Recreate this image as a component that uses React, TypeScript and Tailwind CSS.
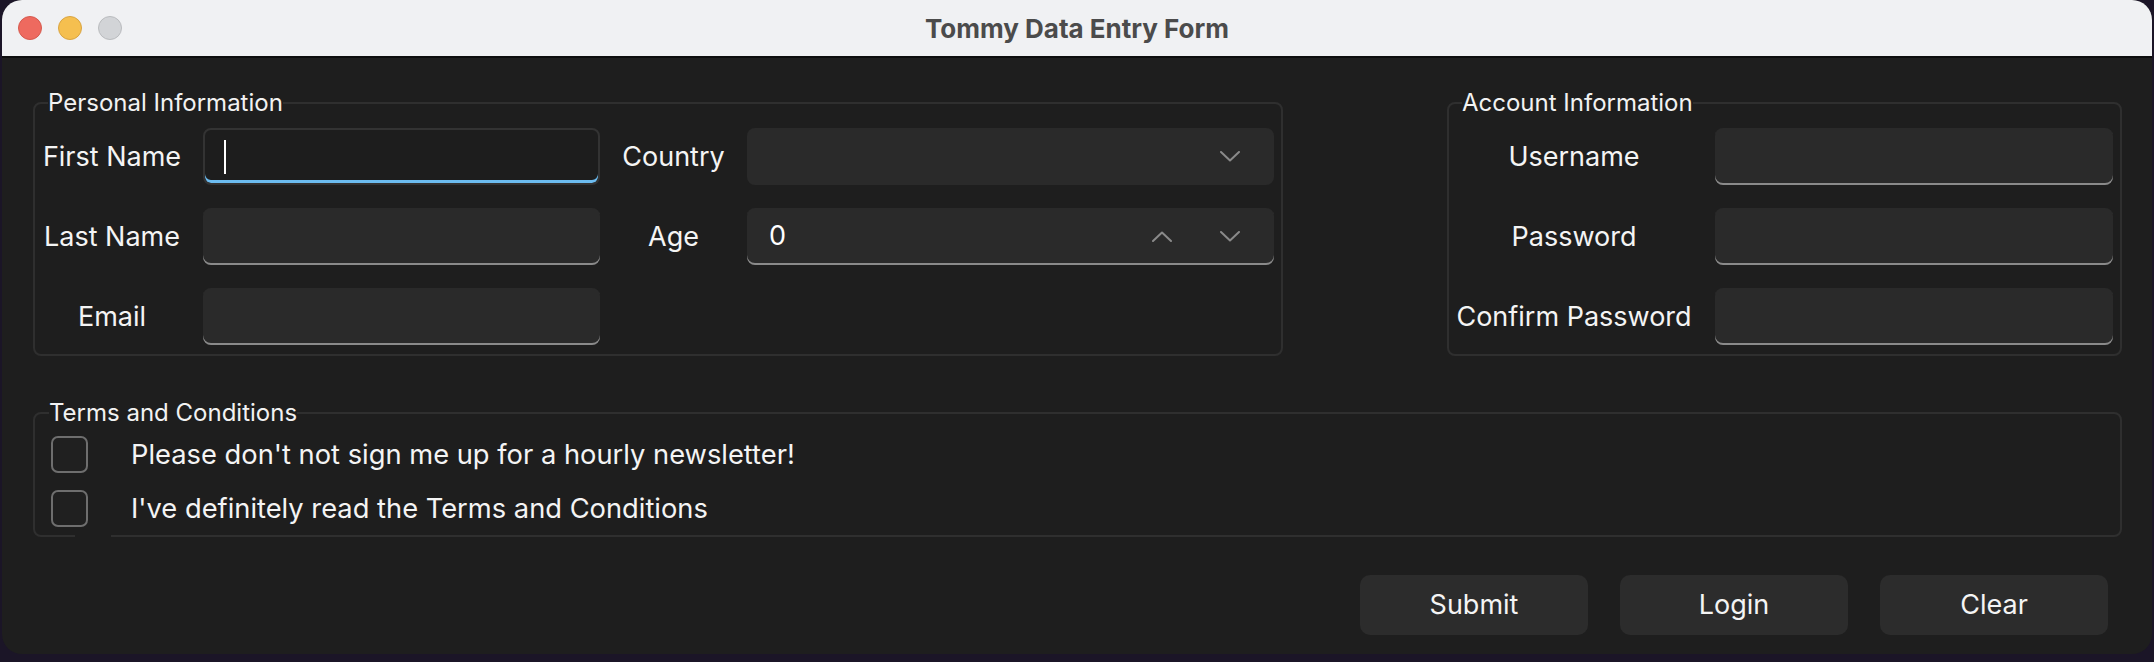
import React from "react";

const font = { fontFamily: "Inter, 'Noto Sans', sans-serif" };

function Chevron({ up = false }: { up?: boolean }) {
  return (
    <svg width="20" height="11" viewBox="0 0 20 11" fill="none">
      <path
        d={up ? "M1 10 L10 1.5 L19 10" : "M1 1 L10 9.5 L19 1"}
        stroke="#8a8a8a"
        strokeWidth="2"
        strokeLinecap="round"
        strokeLinejoin="round"
      />
    </svg>
  );
}

function Field({ focused = false }: { focused?: boolean }) {
  if (focused) {
    return (
      <div className="flex h-[57px] items-center rounded-[8px] border-2 border-[#333333] bg-[#1d1d1d] pl-[19px] shadow-[inset_0_-3px_0_#6cbcf0]">
        <span className="h-[34px] w-[2px] bg-white" />
      </div>
    );
  }
  return (
    <input
      className="h-[57px] w-full rounded-[8px] bg-[#2a2a2a] px-[20px] text-[27px] text-white outline-none shadow-[inset_0_-2px_0_#8a8a8a]"
      style={font}
    />
  );
}

function Label({ children }: { children: React.ReactNode }) {
  return (
    <div className="flex items-center justify-center whitespace-nowrap text-[27px] leading-none text-[#f4f4f4]">
      {children}
    </div>
  );
}

function Legend({ children, className }: { children: React.ReactNode; className: string }) {
  return (
    <legend className={`px-0 text-[24px] leading-[26px] text-[#f2f2f2] ${className}`}>
      {children}
    </legend>
  );
}

function Check({ text }: { text: string }) {
  return (
    <label className="flex h-[37px] items-center">
      <span className="h-[37px] w-[37px] rounded-[7px] border-2 border-[#6e6e6e] bg-[#202020]" />
      <span className="ml-[43px] text-[27.3px] leading-none text-[#f4f4f4]">{text}</span>
    </label>
  );
}

export default function App() {
  return (
    <div className="h-[662px] w-[2154px] bg-[#1b1527] px-[2px] pb-[8px]" style={font}>
      <div className="flex h-full flex-col overflow-hidden rounded-[20px] bg-[#1e1e1e]">
        <div className="relative flex h-[58px] shrink-0 items-center border-b-2 border-[#0e0e0e] bg-[#f0f1f3] pl-[16px]">
          <div className="flex gap-[16px]">
            <span className="h-[24px] w-[24px] rounded-full border border-[#d55a4e] bg-[#ee6a5f]" />
            <span className="h-[24px] w-[24px] rounded-full border border-[#d8a442] bg-[#f5bf4f]" />
            <span className="h-[24px] w-[24px] rounded-full border border-[#b9bbbe] bg-[#d2d4d7]" />
          </div>
          <div className="absolute inset-0 flex items-center justify-center text-[26px] font-bold text-[#4b4b4b]">
            Tommy Data Entry Form
          </div>
        </div>

        <div className="flex flex-1 flex-col pl-[31px] pr-[30px] pt-[32px]">
          <div className="flex">
            <fieldset className="w-[1250px] rounded-[8px] border-2 border-[#2f2f2f] pb-[9px] pl-[8px] pr-[7px] pt-[12px]">
              <Legend className="ml-[5px]">Personal Information</Legend>
              <div className="grid grid-cols-[138px_397px_103px_527px] gap-x-[22px] gap-y-[23px]">
                <Label>First Name</Label>
                <Field focused />
                <Label>Country</Label>
                <div className="flex h-[57px] items-center justify-end rounded-[8px] bg-[#2a2a2a] pr-[34px]">
                  <Chevron />
                </div>

                <Label>Last Name</Label>
                <Field />
                <Label>Age</Label>
                <div className="flex h-[57px] items-center rounded-[8px] bg-[#2a2a2a] pl-[22px] pr-[34px] text-[27px] text-white shadow-[inset_0_-2px_0_#8a8a8a]">
                  <span className="flex-1">0</span>
                  <Chevron up />
                  <span className="ml-[48px]">
                    <Chevron />
                  </span>
                </div>

                <Label>Email</Label>
                <Field />
              </div>
            </fieldset>

            <fieldset className="ml-auto w-[675px] rounded-[8px] border-2 border-[#2f2f2f] pb-[9px] pl-[8px] pr-[7px] pt-[12px]">
              <Legend className="ml-[5px]">Account Information</Legend>
              <div className="grid grid-cols-[234px_398px] gap-x-[24px] gap-y-[23px]">
                <Label>Username</Label>
                <Field />
                <Label>Password</Label>
                <Field />
                <Label>Confirm Password</Label>
                <Field />
              </div>
            </fieldset>
          </div>

          <fieldset className="relative mt-[44px] rounded-[8px] border-2 border-[#2f2f2f] pb-[8px] pl-[16px] pt-[10px]">
            <Legend className="-ml-[2px]">Terms and Conditions</Legend>
            <div className="flex flex-col gap-[17px]">
              <Check text="Please don't not sign me up for a hourly newsletter!" />
              <Check text="I've definitely read the Terms and Conditions" />
            </div>
            <span className="absolute bottom-[-2px] left-[40px] h-[3px] w-[36px] bg-[#1e1e1e]" />
          </fieldset>

          <div className="mt-[38px] flex justify-end gap-[32px] pr-[14px]">
            {["Submit", "Login", "Clear"].map((b) => (
              <button
                key={b}
                className="h-[60px] w-[228px] rounded-[10px] bg-[#2c2c2c] text-[27px] text-[#f4f4f4]"
              >
                {b}
              </button>
            ))}
          </div>
        </div>
      </div>
    </div>
  );
}
